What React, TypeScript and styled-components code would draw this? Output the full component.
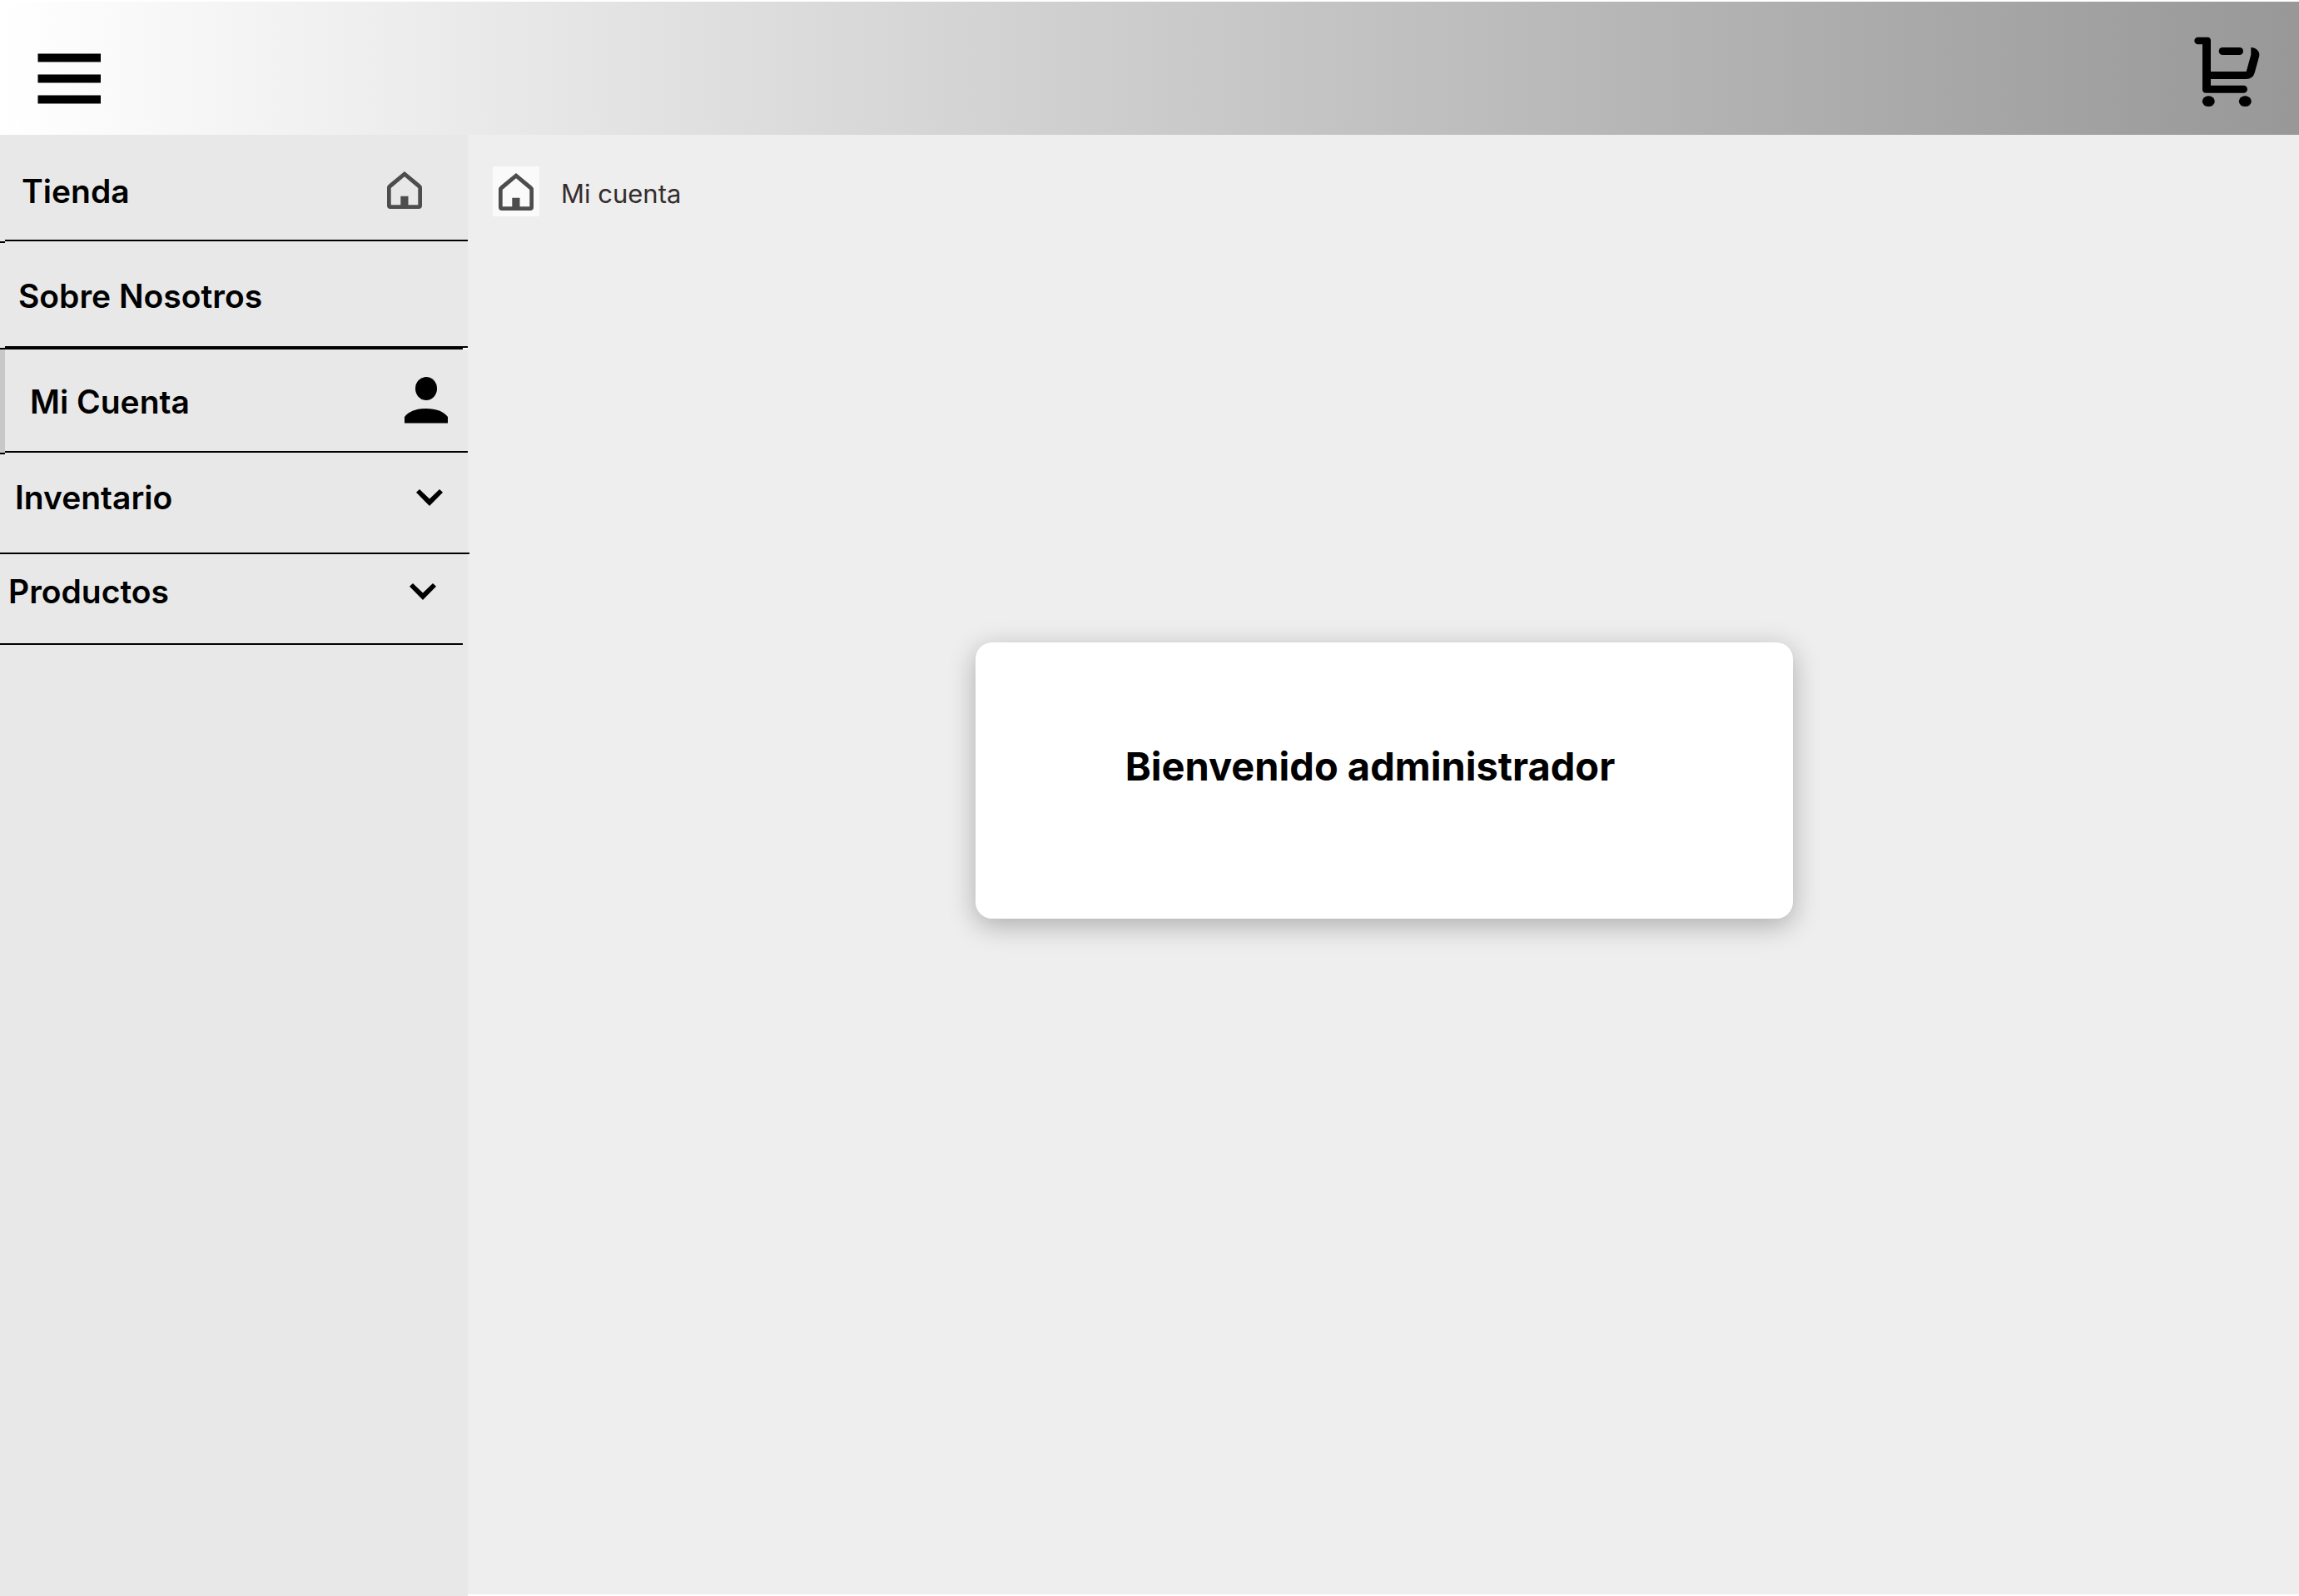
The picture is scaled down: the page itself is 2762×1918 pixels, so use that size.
import React from "react";
import styled, { createGlobalStyle, css } from "styled-components";

const GlobalStyle = createGlobalStyle`
  *, *::before, *::after { box-sizing: border-box; }
  body {
    margin: 0;
    background: #ffffff;
    color: #000000;
    font-family: Inter, "Liberation Sans", sans-serif;
  }
`;

const Page = styled.div`
  display: flex;
  flex-direction: column;
  min-height: 100vh;
`;

const Header = styled.header`
  display: flex;
  align-items: flex-start;
  justify-content: space-between;
  height: 162px;
  padding: 42px 46px 0 44px;
  border-top: 2px solid #ffffff;
  background: linear-gradient(90deg, #ffffff, #989898) padding-box;
`;

const IconButton = styled.button<{ $top?: number }>`
  display: flex;
  margin: ${({ $top = 0 }) => $top}px 0 0;
  padding: 0;
  border: 0;
  background: none;
  color: inherit;
  cursor: pointer;
`;

const Body = styled.div`
  display: flex;
  flex: 1;
`;

const Sidebar = styled.nav`
  flex: 0 0 562px;
  background: #e8e8e8;
`;

const Menu = styled.ul`
  margin: 0;
  padding: 0;
  list-style: none;
`;

const MenuItem = styled.li<{
  $height: number;
  $lineWidth: number;
  $notch?: boolean;
  $active?: boolean;
}>`
  position: relative;
  display: flex;
  height: ${({ $height }) => $height}px;

  &::after {
    content: "";
    position: absolute;
    left: ${({ $notch }) => ($notch ? 6 : 0)}px;
    bottom: 0;
    width: ${({ $lineWidth, $notch }) => $lineWidth - ($notch ? 6 : 0)}px;
    height: 2px;
    background: #000000;
  }

  ${({ $notch }) =>
    $notch &&
    css`
      &::before {
        content: "";
        position: absolute;
        z-index: 1;
        left: 0;
        bottom: -2px;
        width: 6px;
        height: 2px;
        background: #000000;
      }
    `}

  ${({ $active }) =>
    $active &&
    css`
      background: linear-gradient(90deg, #000000 556px, #ffffff 556px) top / 100% 2px no-repeat;
    `}
`;

const MenuLink = styled.a<{
  $left: number;
  $right: number;
  $above?: number;
  $below?: number;
  $active?: boolean;
}>`
  display: flex;
  flex: 1;
  align-items: center;
  justify-content: space-between;
  margin-top: ${({ $active }) => ($active ? 2 : 0)}px;
  padding: ${({ $above = 0, $right, $below = 0, $left }) =>
    `${$above}px ${$right}px ${$below + 2}px ${$left}px`};
  border-left: ${({ $active }) => ($active ? "6px solid #c8c8c8" : "0")};
  color: inherit;
  font-size: 39px;
  font-weight: 600;
  line-height: 48px;
  text-decoration: none;
`;

const MenuLabel = styled.span<{ $low?: boolean }>`
  padding-top: ${({ $low }) => ($low ? 4 : 0)}px;
`;

const Main = styled.main`
  display: flex;
  flex: 1;
  flex-direction: column;
  min-width: 0;
  padding: 38px 28px 38px 30px;
  border-bottom: 2px solid #ffffff;
  background: #eeeeee;
`;

const Breadcrumb = styled.nav`
  display: flex;
  align-items: center;
  gap: 26px;
  color: #352d2d;
  font-size: 31px;
  line-height: 40px;
`;

const HomeLink = styled.a`
  display: flex;
  align-items: center;
  justify-content: center;
  width: 56px;
  height: 60px;
  background: #fafafa;
`;

const Crumb = styled.span`
  padding-top: 6px;
`;

const Card = styled.section`
  display: flex;
  align-items: center;
  align-self: center;
  justify-content: center;
  width: 982px;
  max-width: 100%;
  min-height: 332px;
  margin-top: 512px;
  padding: 0 34px 34px 0;
  border-radius: 20px;
  background: #ffffff;
  box-shadow: 0 8px 32px rgba(0, 0, 0, 0.28);
`;

const Welcome = styled.h1`
  margin: 0;
  font-size: 47px;
  font-weight: 700;
  line-height: 60px;
`;

const MenuIcon = () => (
  <svg width="78" height="62" viewBox="0 0 78 62" aria-hidden="true">
    <path d="M1.5 .5H77V10.5H1.5ZM1.5 25.5H77V35.5H1.5ZM1.5 50.5H77V60.5H1.5Z" />
  </svg>
);

const CartIcon = () => (
  <svg width="80" height="85" viewBox="0 0 80 85" aria-hidden="true">
    <path d="M4.6 .8H16Q20 .8 20 5V42H62.7L68.3 21.7V13C75 13.5 79.5 18 78.2 23.5L72.7 43.5Q70.5 51 62.5 51H20V58.7H59.5A4.5 4.5 0 0 1 59.5 67.7H14.5Q10 67.7 10 63.5V9.3H4.6A4.25 4.25 0 0 1 4.6 .8Z" />
    <rect x="29.7" y="13" width="29.3" height="9" rx="4.5" />
    <ellipse cx="17.3" cy="77.7" rx="7.5" ry="6.4" />
    <ellipse cx="61.3" cy="77.7" rx="7.5" ry="6.4" />
  </svg>
);

const HomeIcon = () => (
  <svg width="42" height="45" viewBox="0 0 42 45" fill="#4d4d4d" aria-hidden="true">
    <path
      fillRule="evenodd"
      d="M21 0L39.8 15.6Q42 17.4 42 20V41Q42 45 38 45H4Q0 45 0 41V20Q0 17.4 2.2 15.6ZM21 6.3L4.7 19.9V40.3H16.3V29.7H25.5V40.3H37.3V19.9Z"
    />
  </svg>
);

const PersonIcon = () => (
  <svg width="52" height="56" viewBox="0 0 52 56" aria-hidden="true">
    <ellipse cx="26" cy="14" rx="13" ry="14" />
    <path d="M0 55.5V48C5 41.5 14 38 26 38S47 41.5 52 48V55.5Z" />
  </svg>
);

const ChevronIcon = () => (
  <svg width="32" height="20" viewBox="0 0 32 20" aria-hidden="true">
    <path d="M0 3.8L4 0L16 11.6L28 0L32 3.8L16 20Z" />
  </svg>
);

const items = [
  { label: "Tienda", icon: <HomeIcon />, height: 128, line: 562, notch: true, left: 26, right: 55, above: 6 },
  { label: "Sobre Nosotros", height: 128, line: 562, notch: true, left: 22, right: 24, above: 2 },
  { label: "Mi Cuenta", icon: <PersonIcon />, height: 126, line: 562, notch: true, active: true, left: 30, right: 24 },
  { label: "Inventario", icon: <ChevronIcon />, height: 122, line: 564, left: 18, right: 30, below: 12 },
  { label: "Productos", icon: <ChevronIcon />, height: 109, line: 556, left: 10, right: 38, below: 18 },
];

export default function App() {
  return (
    <Page>
      <GlobalStyle />
      <Header>
        <IconButton type="button" aria-label="Menú" $top={20}>
          <MenuIcon />
        </IconButton>
        <IconButton type="button" aria-label="Carrito">
          <CartIcon />
        </IconButton>
      </Header>
      <Body>
        <Sidebar aria-label="Principal">
          <Menu>
            {items.map((item) => (
              <MenuItem
                key={item.label}
                $height={item.height}
                $lineWidth={item.line}
                $notch={item.notch}
                $active={item.active}
              >
                <MenuLink
                  href="#"
                  aria-current={item.active ? "page" : undefined}
                  $left={item.left}
                  $right={item.right}
                  $above={item.above}
                  $below={item.below}
                  $active={item.active}
                >
                  <MenuLabel $low={item.notch}>{item.label}</MenuLabel>
                  {item.icon}
                </MenuLink>
              </MenuItem>
            ))}
          </Menu>
        </Sidebar>
        <Main>
          <Breadcrumb aria-label="Ruta">
            <HomeLink href="#" aria-label="Inicio">
              <HomeIcon />
            </HomeLink>
            <Crumb>Mi cuenta</Crumb>
          </Breadcrumb>
          <Card>
            <Welcome>Bienvenido administrador</Welcome>
          </Card>
        </Main>
      </Body>
    </Page>
  );
}
